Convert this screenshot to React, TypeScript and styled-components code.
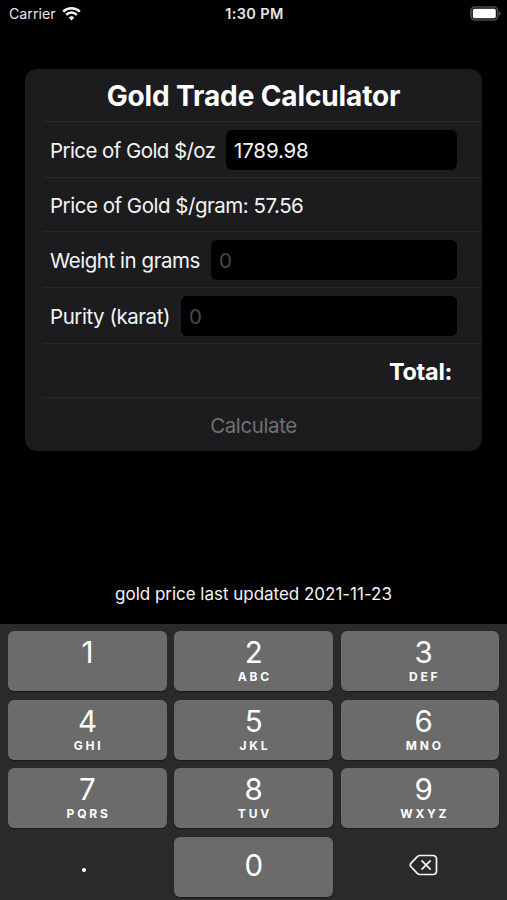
import React from "react";
import styled, { createGlobalStyle } from "styled-components";

const GlobalStyle = createGlobalStyle`
  * { box-sizing: border-box; }
  body { margin: 0; background: #000; font-family: Inter, "Liberation Sans", sans-serif; color: #f4f4f4; overflow: hidden; }
`;

const Screen = styled.main`
  width: 507px;
  height: 900px;
  display: flex;
  flex-direction: column;
  background: #000;
`;

const StatusBar = styled.header`
  height: 26px;
  display: grid;
  grid-template-columns: 1fr auto 1fr;
  align-items: center;
  padding: 1px 6px 0 9px;
  font-size: 14.2px;
  line-height: 18px;
  color: #e8e8e8;
`;

const Carrier = styled.div`
  display: flex;
  align-items: center;
  gap: 6px;
`;

const Clock = styled.div`
  font-weight: 600;
  font-size: 14.5px;
  letter-spacing: 0.4px;
  margin-left: -1px;
`;

const BatterySlot = styled.div`
  display: flex;
  justify-content: flex-end;
`;

const Card = styled.section`
  width: 457px;
  height: 382px;
  margin: 43px 0 0 25px;
  border-radius: 12px;
  background: #1c1c1e;
  display: flex;
  flex-direction: column;
  overflow: hidden;
`;

const Row = styled.div<{ $h: number; $justify?: string; $last?: boolean }>`
  height: ${(p) => p.$h}px;
  flex: none;
  margin-left: 18px;
  padding: 0 25px 0 7px;
  display: flex;
  align-items: center;
  justify-content: ${(p) => p.$justify ?? "flex-start"};
  border-bottom: ${(p) => (p.$last ? "none" : "1px solid #29292b")};
`;

const Title = styled.h1`
  margin: 0;
  padding-top: 1px;
  font-size: 28px;
  font-weight: 700;
  letter-spacing: -0.12px;
  color: #fff;
`;

const Label = styled.label<{ $w?: number; $track?: number }>`
  width: ${(p) => (p.$w ? `${p.$w}px` : "auto")};
  flex: none;
  padding-top: 2px;
  font-size: 20.5px;
  letter-spacing: ${(p) => p.$track ?? -0.45}px;
  white-space: nowrap;
`;

const Field = styled.input`
  flex: 1;
  min-width: 0;
  height: 40px;
  padding: 2px 8px 0;
  border: 0;
  border-radius: 6px;
  background: #000;
  color: #f4f4f4;
  font: inherit;
  font-size: 20.5px;
  letter-spacing: -0.15px;
  outline: none;
  &::placeholder { color: #48484a; opacity: 1; }
`;

const Total = styled.strong`
  padding-top: 2px;
  font-size: 23.5px;
  font-weight: 700;
  letter-spacing: -0.3px;
  color: #fff;
  margin-right: 5px;
`;

const Calculate = styled.button`
  border: 0;
  padding: 2px 0 0;
  background: none;
  color: #707072;
  font: inherit;
  font-size: 20.5px;
  letter-spacing: -0.4px;
`;

const Updated = styled.p`
  margin: auto 0 19px;
  text-align: center;
  font-size: 17px;
  line-height: 22px;
  letter-spacing: -0.02px;
`;

const Keyboard = styled.section`
  height: 276px;
  flex: none;
  padding: 7px 7.5px 3.5px 8px;
  background: #2a2a2a;
  display: grid;
  grid-template-columns: repeat(3, 1fr);
  grid-template-rows: repeat(4, 60px);
  column-gap: 7.5px;
  row-gap: 8.5px;
`;

const Key = styled.button<{ $plain?: boolean; $center?: boolean }>`
  border: 0;
  border-radius: 6px;
  padding: ${(p) => (p.$center ? "0 0 3px" : "4px 0 0")};
  background: ${(p) => (p.$plain ? "transparent" : "#6b6b6b")};
  box-shadow: ${(p) => (p.$plain ? "none" : "0 1px 1px #1a1a1a")};
  color: #fff;
  font-family: inherit;
  display: flex;
  flex-direction: column;
  align-items: center;
  justify-content: ${(p) => (p.$center ? "center" : "flex-start")};
  &:nth-child(3n) { padding-left: 7px; }
`;

const Digit = styled.span`
  font-size: 29.5px;
  font-weight: 400;
  line-height: 34px;
`;

const Letters = styled.span`
  font-size: 12px;
  font-weight: 700;
  line-height: 14px;
  padding-top: 1px;
  letter-spacing: 2.8px;
  margin-right: -2.4px;
`;

const Dot = styled.span`
  width: 4px;
  height: 4px;
  margin: 10px 0 0 -7px;
  border-radius: 50%;
  background: #fff;
`;

const KEYS = [
  ["1", ""], ["2", "ABC"], ["3", "DEF"],
  ["4", "GHI"], ["5", "JKL"], ["6", "MNO"],
  ["7", "PQRS"], ["8", "TUV"], ["9", "WXYZ"],
];

const WifiIcon = () => (
  <svg width="19" height="15" viewBox="0 0 19 15" fill="none" stroke="#f2f2f2" strokeWidth="2.5">
    <path d="M1.2 5.6A11.8 11.8 0 0 1 17.8 5.6" />
    <path d="M4.2 8.8A7.5 7.5 0 0 1 14.8 8.8" />
    <path d="M6.7 11.5A4 4 0 0 1 12.3 11.5L9.5 14.4Z" fill="#f2f2f2" stroke="none" />
  </svg>
);

const BatteryIcon = () => (
  <svg width="31" height="15" viewBox="0 0 31 15">
    <rect x="1" y="1" width="26.6" height="13" rx="4" fill="none" stroke="#4c4c4c" strokeWidth="1.7" />
    <rect x="2.8" y="2.8" width="23" height="9.4" rx="1.8" fill="#fff" />
    <path d="M28.9 5.2Q30.9 6 30.9 7.5T28.9 9.8Z" fill="#4c4c4c" />
  </svg>
);

const DeleteIcon = () => (
  <svg width="29" height="22" viewBox="0 0 29 22" fill="none" stroke="#f4f4f4" strokeWidth="1.7" strokeLinecap="round" strokeLinejoin="round">
    <path d="M11 1.5H23.8Q27.5 1.5 27.5 5.2V16.8Q27.5 20.5 23.8 20.5H11Q9.5 20.5 8.3 19.3L1.9 12.6Q.5 11 1.9 9.4L8.3 2.7Q9.5 1.5 11 1.5Z" />
    <path d="M13 6.8L21.2 15.2M21.2 6.8L13 15.2" />
  </svg>
);

export default function App() {
  return (
    <Screen>
      <GlobalStyle />
      <StatusBar>
        <Carrier>Carrier <WifiIcon /></Carrier>
        <Clock>1:30 PM</Clock>
        <BatterySlot><BatteryIcon /></BatterySlot>
      </StatusBar>
      <Card>
        <Row $h={53} $justify="center"><Title>Gold Trade Calculator</Title></Row>
        <Row $h={56}>
          <Label $w={176} $track={-0.58}>Price of Gold $/oz</Label>
          <Field defaultValue="1789.98" />
        </Row>
        <Row $h={54}><Label $track={-0.48}>Price of Gold $/gram: 57.56</Label></Row>
        <Row $h={56}>
          <Label $w={161}>Weight in grams</Label>
          <Field placeholder="0" />
        </Row>
        <Row $h={56}>
          <Label $w={131}>Purity (karat)</Label>
          <Field placeholder="0" />
        </Row>
        <Row $h={54} $justify="flex-end"><Total>Total:</Total></Row>
        <Row $h={53} $justify="center" $last><Calculate>Calculate</Calculate></Row>
      </Card>
      <Updated>gold price last updated 2021-11-23</Updated>
      <Keyboard>
        {KEYS.map(([digit, letters]) => (
          <Key key={digit}>
            <Digit>{digit}</Digit>
            {letters && <Letters>{letters}</Letters>}
          </Key>
        ))}
        <Key $plain $center aria-label="Decimal point"><Dot /></Key>
        <Key $center><Digit>0</Digit></Key>
        <Key $plain $center aria-label="Delete"><DeleteIcon /></Key>
      </Keyboard>
    </Screen>
  );
}
